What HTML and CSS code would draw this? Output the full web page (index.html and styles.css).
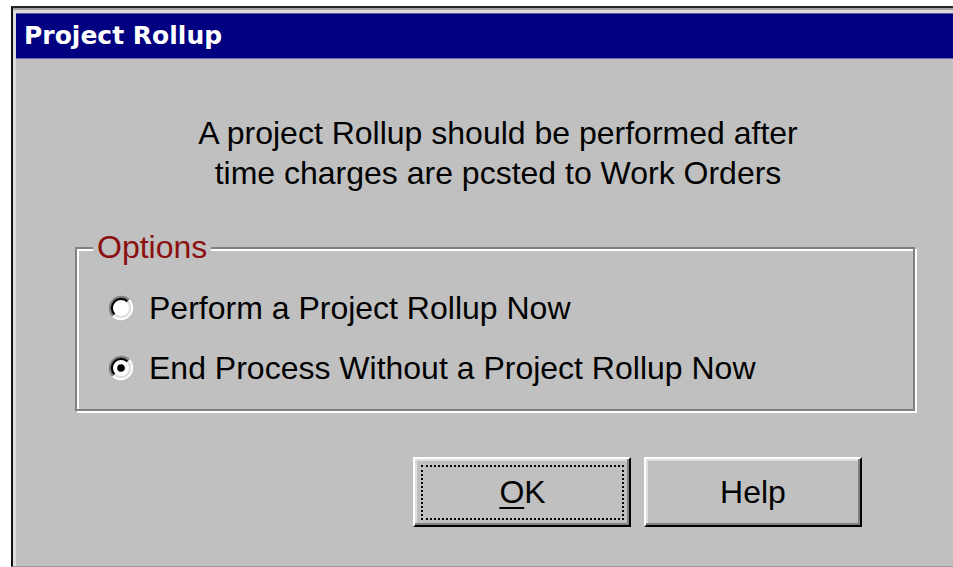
FILE: index.html
```html
<!DOCTYPE html>
<html lang="en">
<head>
<meta charset="utf-8">
<title>Project Rollup</title>
<link rel="stylesheet" href="styles.css">
</head>
<body>
<div class="window">
  <div class="titlebar">Project Rollup</div>
  <div class="client">
    <p class="message">A project Rollup should be performed after<br>time charges are pcsted to Work Orders</p>

    <div class="group">
      <span class="group-label">Options</span>
      <label class="radio-row">
        <svg class="radio" viewBox="0 0 24 24" width="26" height="26" aria-hidden="true">
          <circle cx="12" cy="12" r="8" fill="#fff"/>
          <path d="M4.58 19.42 A10.5 10.5 0 0 1 19.42 4.58" fill="none" stroke="#808080" stroke-width="2"/>
          <path d="M19.42 4.58 A10.5 10.5 0 0 1 4.58 19.42" fill="none" stroke="#ffffff" stroke-width="2"/>
          <path d="M5.99 18.01 A8.5 8.5 0 0 1 18.01 5.99" fill="none" stroke="#000" stroke-width="2"/>
          <path d="M18.01 5.99 A8.5 8.5 0 0 1 5.99 18.01" fill="none" stroke="#dfdfdf" stroke-width="2"/>
        </svg>
        <span>Perform a Project Rollup Now</span>
      </label>
      <label class="radio-row">
        <svg class="radio" viewBox="0 0 24 24" width="26" height="26" aria-hidden="true">
          <circle cx="12" cy="12" r="8" fill="#fff"/>
          <path d="M4.58 19.42 A10.5 10.5 0 0 1 19.42 4.58" fill="none" stroke="#808080" stroke-width="2"/>
          <path d="M19.42 4.58 A10.5 10.5 0 0 1 4.58 19.42" fill="none" stroke="#ffffff" stroke-width="2"/>
          <path d="M5.99 18.01 A8.5 8.5 0 0 1 18.01 5.99" fill="none" stroke="#000" stroke-width="2"/>
          <path d="M18.01 5.99 A8.5 8.5 0 0 1 5.99 18.01" fill="none" stroke="#dfdfdf" stroke-width="2"/>
          <circle cx="12" cy="12" r="3.5" fill="#000"/>
        </svg>
        <span>End Process Without a Project Rollup Now</span>
      </label>
    </div>

    <div class="buttons">
      <button class="btn btn-default" type="button"><span class="focus"><u>O</u>K</span></button>
      <button class="btn" type="button"><span class="focus-none">Help</span></button>
    </div>
  </div>
</div>
</body>
</html>
```

FILE: styles.css
```css
html, body {
  margin: 0;
  padding: 0;
  background: #ffffff;
  overflow: hidden;
}

body {
  width: 953px;
  height: 567px;
}

/* dialog frame, running past the right edge of the view */
.window {
  box-sizing: border-box;
  margin: 6px 0 0 11px;
  width: 950px;
  height: 561px;
  border-top: 2px solid #262626;
  border-left: 2px solid #111111;
  border-bottom: 1px solid #9c9c9c;
  padding: 6px 0 0 3px;
  background: #dcdcdc;
  box-shadow: inset 0 2px 0 #a4a4a4;
  display: flex;
  flex-direction: column;
  font-family: "Liberation Sans", Arial, sans-serif;
  color: #000;
}

.titlebar {
  height: 44px;
  flex: none;
  background: #000080;
  color: #ffffff;
  font-family: "DejaVu Sans", sans-serif;
  font-weight: bold;
  font-size: 25px;
  line-height: 44px;
  padding-left: 8px;
  box-shadow: 0 -1px 0 #5a5aa8, 0 1px 0 #7070b0;
  position: relative;
}

.client {
  flex: 1;
  background: #c0c0c0;
  display: flex;
  flex-direction: column;
}

.message {
  margin: 55px 0 0 132px;
  width: 700px;
  text-align: center;
  font-size: 32px;
  line-height: 40px;
}

/* etched group box */
.group {
  position: relative;
  margin: 54px 0 0 59px;
  width: 840px;
  height: 164px;
  box-sizing: border-box;
  border: 2px solid #808080;
  box-shadow: 2px 2px 0 #ffffff, inset 2px 2px 0 #ffffff;
  padding: 29px 0 0 31px;
  display: flex;
  flex-direction: column;
}

.group-label {
  position: absolute;
  left: 16px;
  top: -22px;
  padding: 0 4px;
  background: #c0c0c0;
  color: #8c1010;
  font-size: 32px;
  line-height: 40px;
}

.radio-row {
  height: 60px;
  display: flex;
  align-items: center;
  gap: 15px;
  font-size: 32px;
}

.radio {
  flex: none;
}

.buttons {
  margin: 46px 0 0 397px;
  display: flex;
  gap: 13px;
}

.btn {
  width: 218px;
  height: 70px;
  box-sizing: border-box;
  margin: 0;
  padding: 0;
  background: #c0c0c0;
  border: 2px solid;
  border-color: #ffffff #000000 #000000 #ffffff;
  box-shadow: inset -2px -2px 0 #808080, inset 2px 2px 0 #dfdfdf;
  font-family: "Liberation Sans", Arial, sans-serif;
  font-size: 32px;
  color: #000;
  display: flex;
  align-items: stretch;
}

.focus,
.focus-none {
  flex: 1;
  display: flex;
  align-items: center;
  justify-content: center;
}

.focus {
  margin: 6px 5px 5px 6px;
  border: 2px dotted #000;
}

.focus u {
  text-decoration-thickness: 2px;
  text-underline-offset: 4px;
}
```
